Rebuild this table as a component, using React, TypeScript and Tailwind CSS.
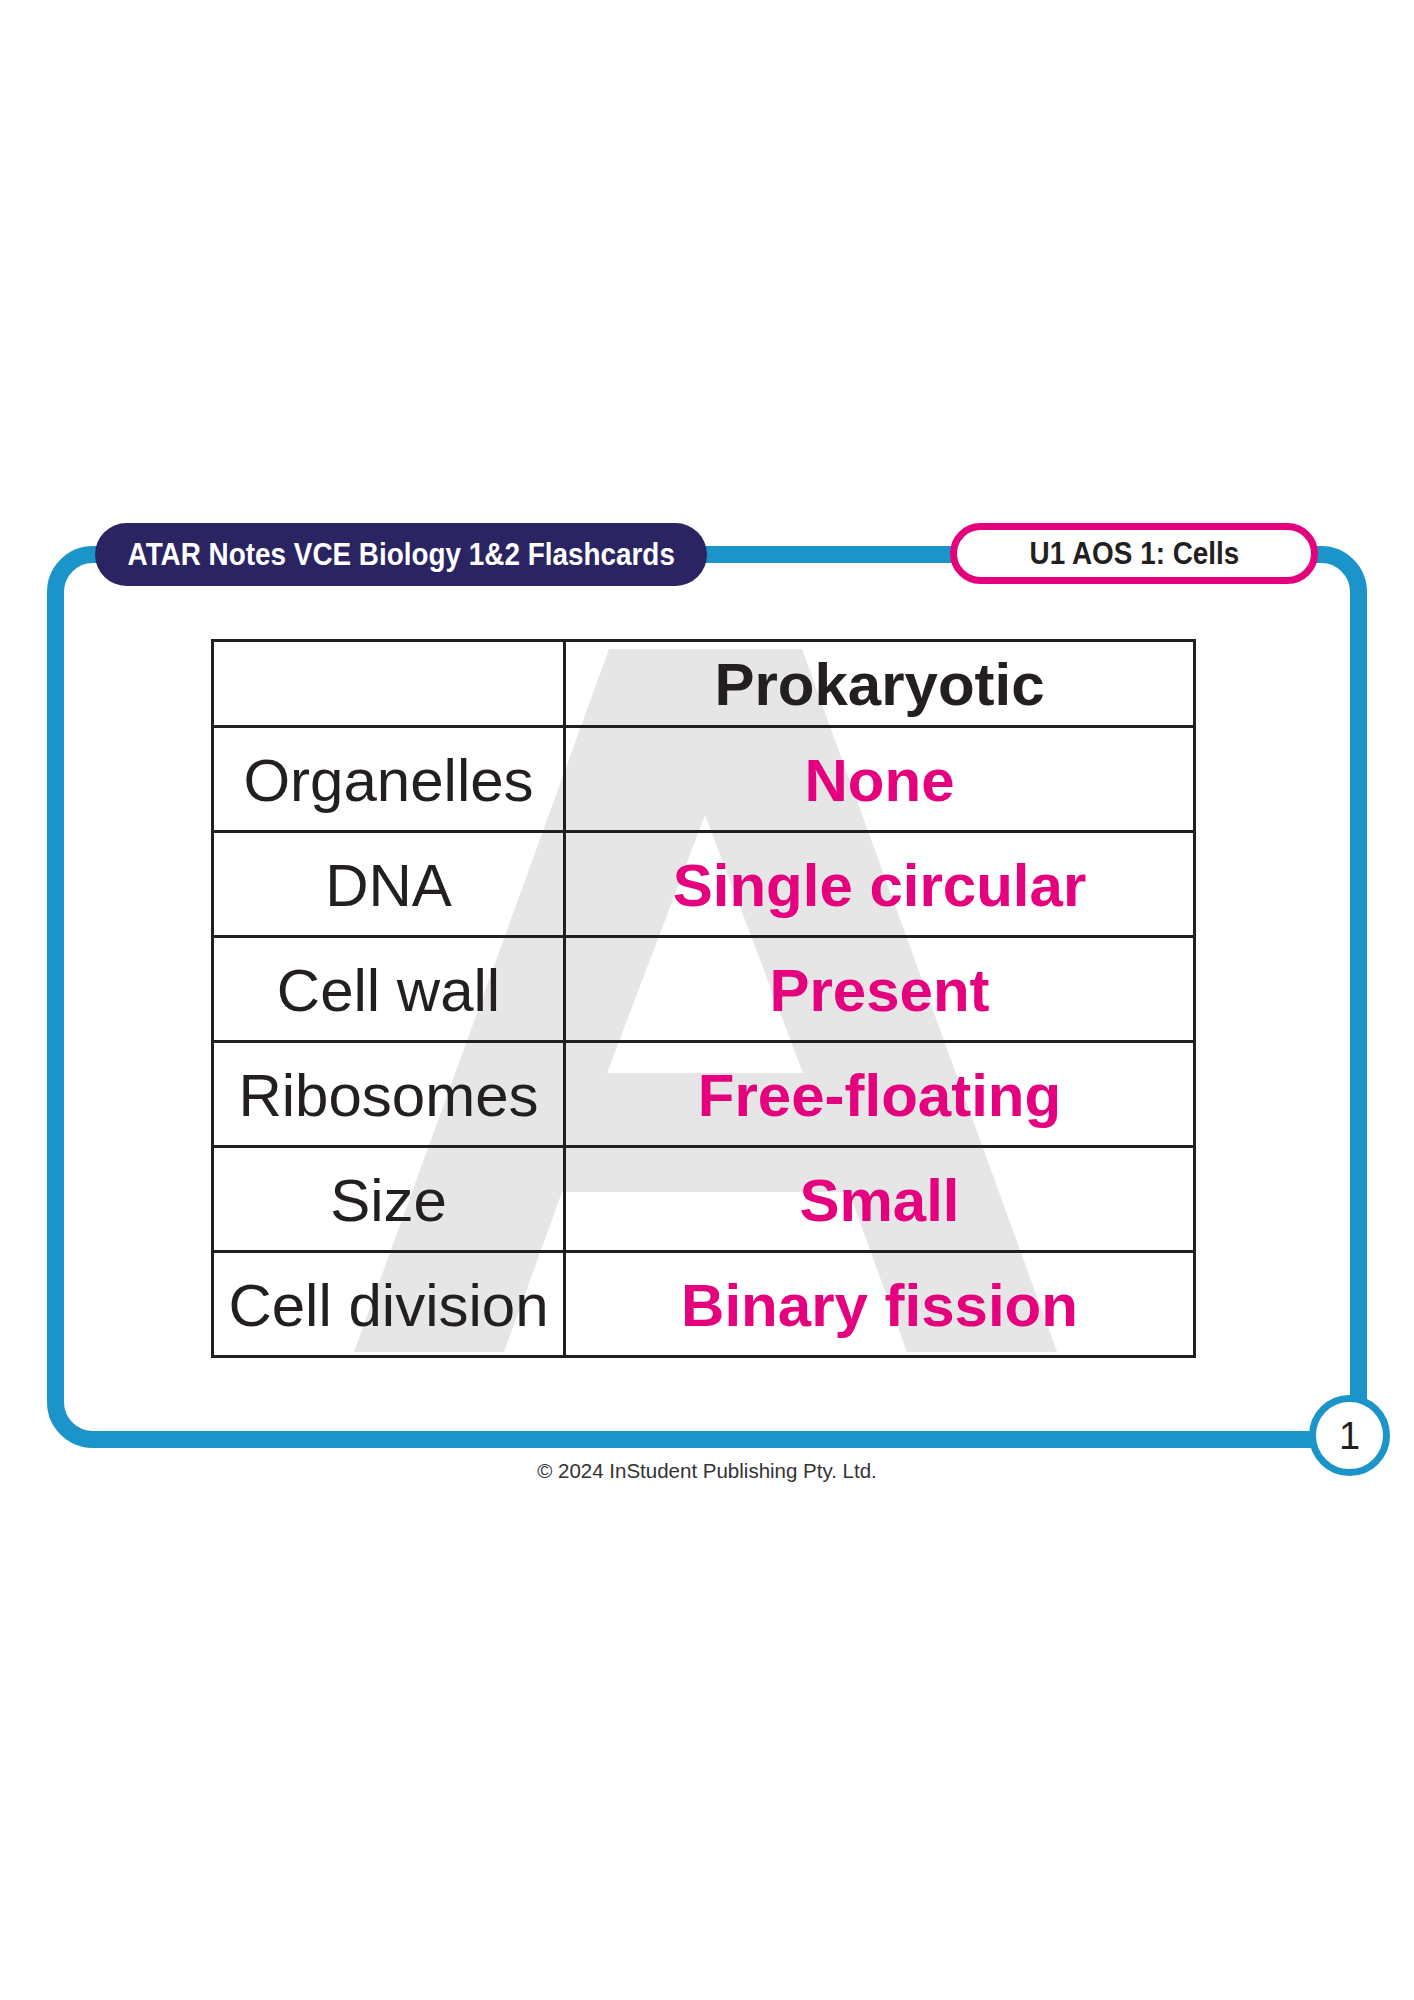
const rows: [string, string][] = [
  ["Organelles", "None"],
  ["DNA", "Single circular"],
  ["Cell wall", "Present"],
  ["Ribosomes", "Free-floating"],
  ["Size", "Small"],
  ["Cell division", "Binary fission"],
];

export default function App() {
  return (
    <div className="w-[1414px] h-[2000px] bg-white font-['Liberation_Sans',Arial,sans-serif] text-[#231f20]">
      <div className="pt-[546px] px-[47px]">
        <div className="relative h-[902px] rounded-[46px] border-[17px] border-[#1b95c9]">
          {/* watermark logo */}
          <svg
            className="absolute left-0 top-0"
            width="1286"
            height="868"
            viewBox="64 563 1286 868"
          >
            <path
              fill="#e6e6e6"
              fillRule="evenodd"
              d="M609 649 L802 649 L1057 1352 L907 1352 L849 1192 L562 1192 L504 1352 L354 1352 Z M705 815 L803 1073 L607 1073 Z"
            />
          </svg>

          {/* title pill */}
          <div className="absolute left-[31px] top-[-40px] w-[612px] h-[63px] rounded-full bg-[#2b2462] flex items-center justify-center">
            <span className="text-white font-bold text-[31.5px] leading-none whitespace-nowrap scale-x-[0.885]">
              ATAR Notes VCE Biology 1&amp;2 Flashcards
            </span>
          </div>

          {/* topic pill */}
          <div className="absolute left-[886px] top-[-40px] w-[368px] h-[61px] rounded-full border-[7px] border-[#e5007e] bg-white flex items-center justify-center">
            <span className="text-[#231f20] font-bold text-[31.5px] leading-none whitespace-nowrap scale-x-[0.885]">
              U1 AOS 1: Cells
            </span>
          </div>

          {/* table */}
          <div className="relative ml-[147px] mt-[76px] w-[985px] border-[3px] border-[#231f20]">
            <div className="flex h-[83px]">
              <div className="w-[352px] border-r-[3px] border-[#231f20]" />
              <div className="flex-1 flex items-center justify-center pt-[3px] text-[60px] font-bold leading-none">
                Prokaryotic
              </div>
            </div>
            {rows.map(([label, value]) => (
              <div key={label} className="flex h-[105px] border-t-[3px] border-[#231f20]">
                <div className="w-[352px] border-r-[3px] border-[#231f20] flex items-center justify-center pt-[3px] text-[60px] leading-none whitespace-nowrap">
                  {label}
                </div>
                <div className="flex-1 flex items-center justify-center pt-[3px] text-[60px] font-bold leading-none text-[#e5007e] whitespace-nowrap">
                  {value}
                </div>
              </div>
            ))}
          </div>

          {/* page number */}
          <div className="absolute left-[1245px] top-[832px] w-[81px] h-[81px] rounded-full border-[7px] border-[#1b95c9] bg-white flex items-center justify-center text-[38px] leading-none text-[#231f20]">
            1
          </div>
        </div>
      </div>
      <div className="mt-[13px] text-center text-[20.5px] leading-none text-[#333333]">
        © 2024 InStudent Publishing Pty. Ltd.
      </div>
    </div>
  );
}
